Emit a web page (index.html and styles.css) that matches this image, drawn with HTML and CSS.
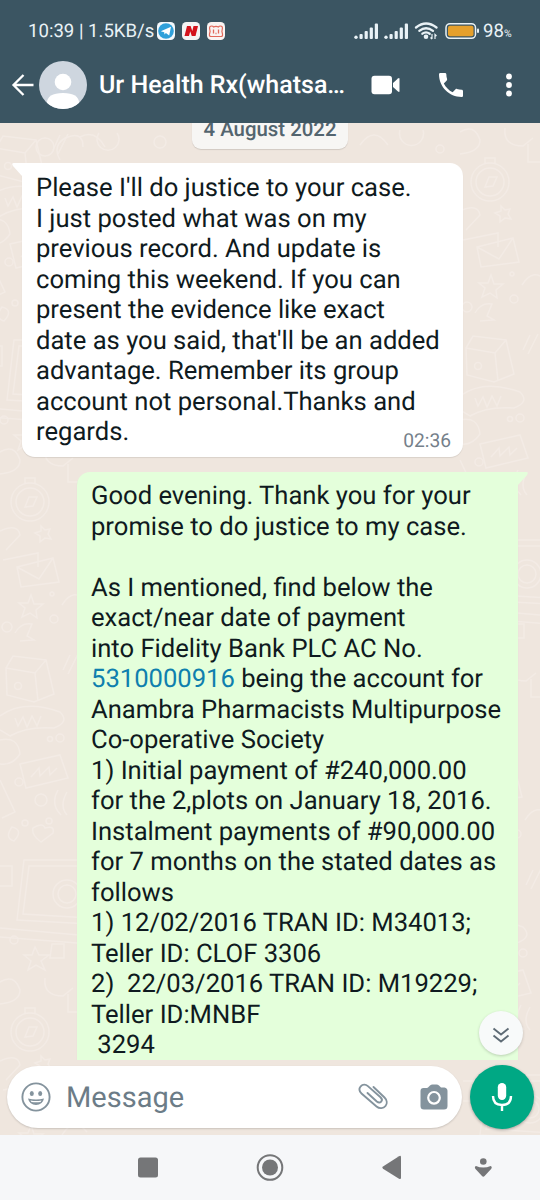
FILE: index.html
```
<!DOCTYPE html>
<html lang="en">
<head>
<meta charset="utf-8">
<title>Chat</title>
<link rel="stylesheet" href="styles.css">
</head>
<body>
<div class="phone">
  <header class="header">
    <div class="status">
      <span class="clock">10:39 | 1.5KB/s</span>
      <svg class="apps" width="70" height="20" viewBox="0 0 70 20">
        <rect x="0" y="1" width="18" height="18" rx="4.5" fill="#f4f8fb"/>
        <circle cx="9" cy="10" r="7.8" fill="#2fa0da"/>
        <path d="M3.8 10.2 14 5.8 12.2 14.4 8.9 12 7.5 13.6 7.2 11.2Z" fill="#fff"/>
        <rect x="25" y="1" width="18" height="18" rx="4.5" fill="#f4f4f4"/>
        <path d="M27.500 15 30 5h3.600l1.700 5L36.500 5H41l-2.500 10h-3.700l-1.600-4.800L32 15Z" fill="#d3131c"/>
        <rect x="50" y="1" width="18" height="18" rx="4.500" fill="#faf4f2"/>
        <path d="M54 15.500q-2 0-1.500-2.500l.6-2.500-.5-3q-.2-2.500 2-2.500 1.500 0 1.900 1 2.500-1.300 5 0 .5-1 2-1 2.100 0 1.900 2.500l-.5 3 .6 2.500q.5 2.500-1.500 2.500Z" fill="none" stroke="#e2695b" stroke-width="1.200"/>
        <path d="M56.500 12.500V8.500M61.500 12.500V8.500M58.500 12.500h1" fill="none" stroke="#e2695b" stroke-width="1.300"/>
      </svg>
      <svg class="signals" width="126" height="20" viewBox="0 0 126 20">
        <g fill="#e9f2f6">
          <circle cx="2" cy="16.300" r="1.700"/><rect x="5.500" y="13" width="3.200" height="5" rx="1"/><rect x="10.600" y="10" width="3.200" height="8" rx="1"/><rect x="15.700" y="6.500" width="3.200" height="11.500" rx="1"/><rect x="20.800" y="2.500" width="3.200" height="15.500" rx="1"/>
          <circle cx="32" cy="16.300" r="1.700"/><rect x="35.500" y="13" width="3.200" height="5" rx="1"/><rect x="40.600" y="10" width="3.200" height="8" rx="1"/><rect x="45.700" y="6.500" width="3.200" height="11.500" rx="1"/><rect x="50.800" y="2.500" width="3.200" height="15.500" rx="1"/>
          <circle cx="72" cy="15.700" r="2.300"/>
          <path d="M78 13v5M76.500 16.500l1.500 1.700M81 18v-4.500l1.500 1.500" fill="none" stroke="#e9f2f6" stroke-width="1.200"/>
        </g>
        <g fill="none" stroke="#e9f2f6" stroke-width="2.300" stroke-linecap="round">
          <path d="M62 6.500Q72-1.500 82.500 6.500"/><path d="M65.300 9.900Q72 4.500 79 9.900"/><path d="M68.400 12.700Q72 10 75.700 12.700"/>
        </g>
        <rect x="92" y="2.700" width="29.500" height="14.600" rx="4" fill="none" stroke="#e9f2f6" stroke-width="1.500"/>
        <rect x="94" y="4.700" width="25.500" height="10.600" rx="2" fill="#e5a02c"/>
        <rect x="123" y="7.500" width="2" height="4.500" rx="1" fill="#e9f2f6"/>
      </svg>
      <span class="battery">98<small class="percent">%</small></span>
    </div>
    <div class="appbar">
      <svg class="back" width="24" height="24" viewBox="0 0 24 24" fill="none" stroke="#fff" stroke-width="2.300"><path d="M23.500 12H3.500M13.500 2 3.500 12l10 10"/></svg>
      <svg class="avatar" width="48" height="48" viewBox="0 0 48 48">
        <defs><clipPath id="face"><circle cx="24" cy="24" r="24"/></clipPath></defs>
        <g clip-path="url(#face)"><rect width="48" height="48" fill="#ced6df"/><circle cx="24" cy="21" r="8.300" fill="#fff"/><path d="M8 48V42Q8 32 24 32T40 42v6Z" fill="#fff"/></g>
      </svg>
      <h1 class="name">Ur Health Rx(whatsa…</h1>
      <svg class="video" width="30" height="20" viewBox="0 0 30 20" fill="#fff"><rect x=".5" y=".8" width="20.500" height="18.400" rx="3"/><path d="M22 8 27 3.500q1.500-1 1.500.5v12q0 1.500-1.500.5L22 12Z"/></svg>
      <svg class="call" width="24" height="24" viewBox="3 3 18 18" fill="#fff"><path d="M6.620 10.790c1.440 2.830 3.760 5.140 6.590 6.590l2.200-2.200c.27-.27.67-.36 1.020-.24 1.120.37 2.330.57 3.570.57.550 0 1 .45 1 1V20c0 .55-.45 1-1 1C10.610 21 3 13.390 3 4c0-.55.45-1 1-1h3.500c.55 0 1 .45 1 1 0 1.250.2 2.450.57 3.570.11.350.03.74-.25 1.020z"/></svg>
      <svg class="more" width="8" height="24" viewBox="0 0 8 24" fill="#fff"><circle cx="4" cy="3.500" r="2.900"/><circle cx="4" cy="12" r="2.900"/><circle cx="4" cy="20.500" r="2.900"/></svg>
    </div>
  </header>

  <main class="chat">
    <svg class="wallpaper" width="540" height="1012" viewBox="0 123 540 1012">
      <defs>
        <g id="doodles">
          <path d="M0 12q14-9 20 8 0 12-20 14M45 8q-2 18 18 18l10-8M68 24v18h18"/>
          <circle cx="30" cy="62" r="19"/><circle cx="30" cy="62" r="14"/><path d="M25 43v-5h10v5M25 67l4-10 8 0-4 9Z"/>
          <path d="m41 86 4 4 5-1-2 5 3 5-6-1-5 4 0-6-5-3 6-2Z"/>
          <path d="M0 91q18-8 20 4L6 110M3 120l35-7v14M17 127l36-9 6 24-38 5ZM17 127l22 12 14-21"/>
          <path d="m31 155 3 9 9 0-7 6 1 8-7-5-8 4 3-9-6-5 9 0Z"/>
          <circle cx="54" cy="179" r="4"/><circle cx="7" cy="187" r="5"/><circle cx="52" cy="154" r="2"/>
          <path d="M15 193q6-11 17-9l-5 12 7 4-14 1M70 215l-7 15M78 214l-10 20M62 165q12-19 25-3"/>
          <path d="M6 228l7-12 33 4 8 34-20 8-27-7ZM6 228l29 5 11-13M35 233l3 28"/><circle cx="18" cy="246" r="3.500"/>
          <path d="M0 276q24-17 60-4 10 10-6 16Q27 286 10 296L0 290M15 278l3 8 5-9 4 10 5-11 5 10 4-10"/>
          <circle cx="50" cy="299" r="2.500"/><circle cx="60" cy="298" r="4"/><path d="M0 300q18-4 20 14-8 12-20 10"/>
          <path d="m20 324 40-9 8 23-42 10ZM31 337l8-9 1 8 9-9 1 8 7-7"/>
          <circle cx="19" cy="342" r="4"/><circle cx="41" cy="360" r="6"/><circle cx="25" cy="383" r="3"/><circle cx="49" cy="381" r="3"/>
          <path d="M0 340l15 32-13 6M58 350q-8 14 3 25M67 352q-8 14 0 23M33 388q10-6 12 0 10-3 8 5l-12 9q-10-7-8-14ZM12 387q12 3 2 14-10-3-2-14Z"/>
          <path d="M90 420H24l-7 60 73 4M90 426H29l-6 48 67 4M0 488l90 8M0 497l90 7"/><circle cx="67" cy="454" r="14"/><circle cx="67" cy="454" r="9"/>
          <path d="M0 426h12v20H0M35 507l4 8 10 0-8 6 4 9-9-5-8 5 3-9-7-6 8 0ZM52 504h12v14H50Z"/><circle cx="14" cy="500" r="4"/>
        </g>
      </defs>
      <g fill="none" stroke="#f3ebe5" stroke-width="1.500">
        <use href="#doodles" y="440"/><use href="#doodles" y="970"/><use href="#doodles" x="-10" y="-80"/>
        <use href="#doodles" x="460" y="120"/><use href="#doodles" x="463" y="655"/>
        <path d="M80 137q15-8 25 10M60 160q-8-14 5-22 18-8 18 9M99 133a11 11 0 1 0 18 0M360 145q14-20 28 0M400 130a12 12 0 1 0 23 0"/>
        <circle cx="45" cy="147" r="9"/><circle cx="160" cy="142" r="6"/><circle cx="440" cy="149" r="4"/>
      </g>
    </svg>

    <div class="messages">
      <div class="date">4 August 2022</div>
      <div class="bubble incoming">
        <svg class="tail" width="14" height="16" viewBox="0 0 14 16"><path d="M14 0H2Q-1 0 1 3L10 13Z" fill="#fff"/></svg>
        <p class="text">Please I'll do justice to your case.
I just posted what was on my
previous record. And update is
coming this weekend. If you can
present the evidence like exact
date as you said, that'll be an added
advantage. Remember its group
account not personal.Thanks and
regards.</p>
        <time class="time">02:36</time>
      </div>
      <div class="bubble outgoing">
        <svg class="tail" width="14" height="16" viewBox="0 0 14 16"><path d="M0 0H12Q15 0 13 3L4 13Z" fill="#e4ffdb"/></svg>
        <p class="text">Good evening. Thank you for your
promise to do justice to my case.

As I mentioned, find below the
exact/near date of payment
into Fidelity Bank PLC AC No.
<span class="link">5310000916</span> being the account for
Anambra Pharmacists Multipurpose
Co-operative Society
1) Initial payment of #240,000.00
for the 2,plots on January 18, 2016.
Instalment payments of #90,000.00
for 7 months on the stated dates as
follows
1) 12/02/2016 TRAN ID: M34013;
Teller ID: CLOF 3306
2)  22/03/2016 TRAN ID: M19229;
Teller ID:MNBF
 3294</p>
      </div>
    </div>

    <div class="jump">
      <svg width="18" height="18" viewBox="0 0 18 18" fill="none" stroke="#5e6b75" stroke-width="1.900"><path d="m1.500 2.500 7.500 6 7.500-6M1.500 9.500l7.500 6 7.500-6"/></svg>
    </div>

    <div class="composer">
      <div class="field">
        <svg class="emoji" width="30" height="30" viewBox="0 0 30 30"><circle cx="15" cy="15" r="13.600" fill="none" stroke="#84939d" stroke-width="1.900"/><ellipse cx="10.800" cy="11.500" rx="2" ry="2.600" fill="#84939d"/><ellipse cx="19.200" cy="11.500" rx="2" ry="2.600" fill="#84939d"/><path d="M7 16.500q8 2 16 0-1.500 6.500-8 6.500t-8-6.500Z" fill="#84939d"/><path d="M9.500 18.400q5.500 1 11 0l-1 1.500q-4.500.8-9 0Z" fill="#fff"/></svg>
        <span class="placeholder">Message</span>
        <svg class="clip" width="30" height="28" viewBox="0 0 30 28" fill="none" stroke="#84939d" stroke-width="1.900" stroke-linecap="round" stroke-linejoin="round"><path d="M15.500 4 26.500 14.500C29 17 29.500 20.500 27.500 23S21.500 26 18.500 23.500L3.500 10.500C1 8.500.8 5.300 2.700 3.300s5-2.100 7.200-.2L22.500 14.200c1.600 1.500 1.800 3.200.7 4.400s-2.900 1.200-4.400-.1L9.500 10"/></svg>
        <svg class="camera" width="28" height="26" viewBox="0 0 28 26"><path d="M8 3.500 10 1.500Q11 .5 12.500.5h4Q18 .5 19 1.500l2 2h3.500Q27.500 4 27.500 7v15q0 3.500-3.500 3.500H4Q.5 25.500.5 22V7Q.5 4 3.500 4H7Z" fill="#84939d"/><circle cx="14" cy="13.800" r="5.800" fill="none" stroke="#fff" stroke-width="2.200"/></svg>
      </div>
      <div class="mic">
        <svg width="22" height="30" viewBox="0 0 22 30"><rect x="6.800" y="1" width="8.400" height="17" rx="4.200" fill="#fff"/><path d="M2 14q0 9 9 9t9-9M11 23v6" fill="none" stroke="#fff" stroke-width="2.400"/></svg>
      </div>
    </div>
  </main>

  <nav class="nav">
    <svg width="540" height="65" viewBox="0 1135 540 65" fill="#757678">
      <rect x="138" y="1157.500" width="20" height="20" rx="2.500"/>
      <circle cx="270" cy="1167.500" r="12.300" fill="none" stroke="#757678" stroke-width="2"/><circle cx="270" cy="1167.500" r="8"/>
      <path d="M383 1166.500 399 1156.200q2-1 2 1v20.500q0 2-2 1L383 1168.700q-1.500-1.100 0-2.200Z"/>
      <circle cx="483.300" cy="1161.500" r="3.300"/><path d="M476 1166q3.500 1.500 7.300 1.500t7.300-1.500q2 1 .5 3l-6.500 7q-1.300 1.500-2.600 0l-6.500-7q-1.500-2 .5-3Z"/>
    </svg>
  </nav>
</div>
</body>
</html>
```
FILE: styles.css
```
* { box-sizing: border-box; }
body { margin: 0; font-family: Roboto, sans-serif; text-rendering: geometricPrecision; }
svg { display: block; flex: none; }
.phone { width: 540px; height: 1200px; display: flex; flex-direction: column; overflow: hidden; }
.header { height: 123px; flex: none; background: #3b5562; color: #fff; position: relative; z-index: 1; padding-top: 16px; }
.status { display: flex; align-items: center; height: 30px; padding-left: 28px; color: #e9f2f6; font-size: 18.600px; }
.clock { width: 129px; white-space: nowrap; }
.signals { margin-left: 127px; }
.battery { margin-left: 3px; white-space: nowrap; }
.percent { font-size: 10.500px; }
.appbar { display: flex; align-items: center; height: 48px; margin-top: 15px; padding-left: 10px; }
.avatar { margin-left: 5px; }
.name { margin: 0 0 0 12px; padding-top: 2px; width: 248px; flex: none; white-space: nowrap; font-size: 25px; font-weight: 500; line-height: 30px; }
.video { margin-left: 24px; }
.call { margin-left: 38px; }
.more { margin-left: 42px; }
.chat { height: 1012px; flex: none; background: #efe6de; position: relative; }
.wallpaper { position: absolute; inset: 0; }
.messages { height: 937px; overflow: hidden; position: relative; display: flex; flex-direction: column; align-items: flex-start; }
.date { flex: none; align-self: center; width: 156px; height: 36px; margin-top: -10px; border-radius: 9px; background: #f7f6f4; box-shadow: 0 1px 1px #00000020; color: #54656f; font-size: 20.400px; font-weight: 500; line-height: 32px; text-align: center; white-space: nowrap; }
.bubble { width: 441px; flex: none; position: relative; border-radius: 13px; padding: 10px 14px 0; box-shadow: 0 1px 1px #00000018; }
.incoming { height: 294px; margin: 14px 0 0 22px; background: #fff; border-top-left-radius: 0; }
.outgoing { height: 700px; margin: 15px 0 0 77px; padding-top: 9px; background: #e4ffdb; border-top-right-radius: 0; }
.tail { position: absolute; top: 0; }
.incoming .tail { left: -10px; }
.outgoing .tail { right: -10px; }
.text { margin: 0; white-space: pre; font-size: 25.600px; line-height: 30.500px; color: #0f1a20; }
.link { color: #0f7fae; }
.time { position: absolute; right: 12px; bottom: 5px; font-size: 19.200px; line-height: 23px; color: #75808a; }
.jump { position: absolute; left: 479px; top: 888px; width: 44px; height: 44px; border-radius: 50%; background: #f8fafa; box-shadow: 0 1px 3px #00000030; display: grid; place-items: center; padding-top: 3px; }
.composer { display: flex; position: relative; padding: 5px 6px 0 7px; gap: 8px; }
.field { width: 455px; height: 62px; margin-top: 1px; border-radius: 31px; background: #fff; box-shadow: 0 1px 2px #00000028; display: flex; align-items: center; padding-left: 14px; }
.placeholder { width: 291px; margin-left: 15px; padding-top: 1px; font-size: 29px; color: #6c7c87; }
.clip { margin-left: 1px; }
.camera { margin-left: 32px; }
.mic { width: 64px; height: 64px; border-radius: 50%; background: #00a884; box-shadow: 0 1px 3px #00000050; display: grid; place-items: center; }
.nav { height: 65px; background: #f6f7f9; }
```
